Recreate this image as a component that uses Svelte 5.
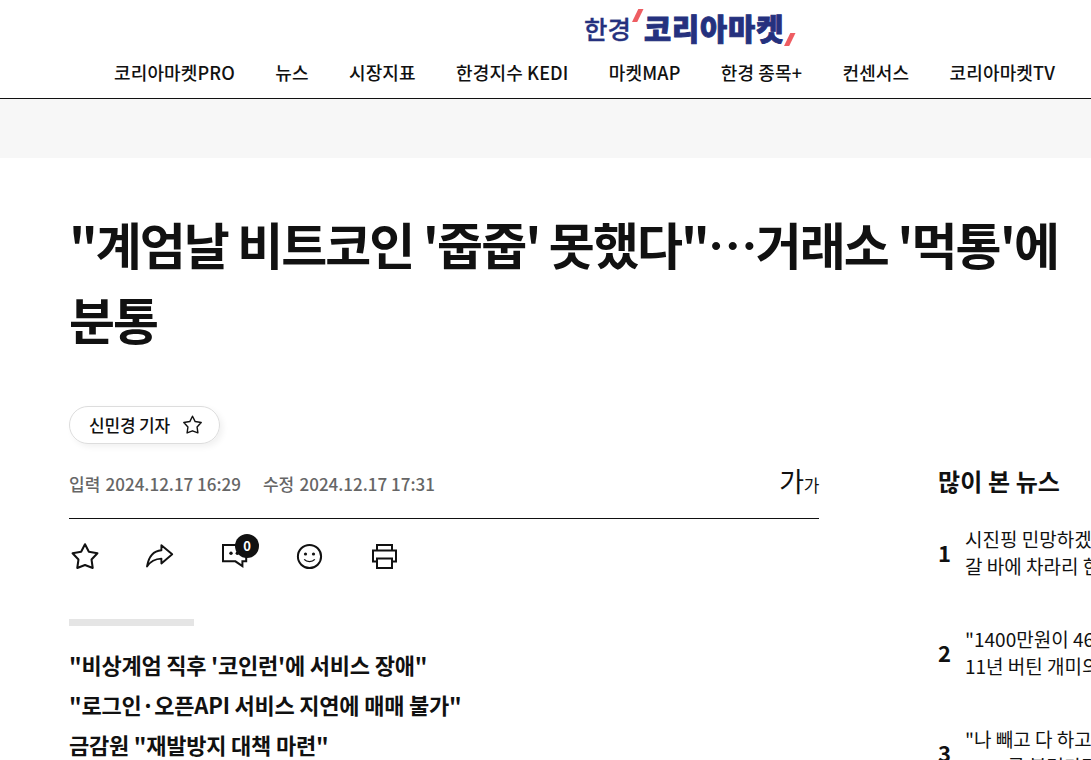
<script lang="ts">
  interface RankedNews {
    rank: number;
    lines: string[];
  }

  const menu = ['코리아마켓PRO', '뉴스', '시장지표', '한경지수 KEDI', '마켓MAP', '한경 종목+', '컨센서스', '코리아마켓TV'];

  const summary = [
    '"비상계엄 직후 \'코인런\'에 서비스 장애"',
    '"로그인·오픈API 서비스 지연에 매매 불가"',
    '금감원 "재발방지 대책 마련"'
  ];

  const ranking: RankedNews[] = [
    { rank: 1, lines: ['시진핑 민망하겠네', '갈 바에 차라리 한국'] },
    { rank: 2, lines: ['"1400만원이 46억', '11년 버틴 개미의'] },
    { rank: 3, lines: ['"나 빼고 다 하고', '6984를 불러가다'] }
  ];

  let commentCount = $state(0);
</script>

{#snippet star(size: number, stroke: number)}
  <svg width={size} height={size} viewBox="0 0 28 28" fill="none" stroke="#111" stroke-width={stroke} stroke-linejoin="round">
    <path d="M14 3 17.6 10.1 25.6 11.4 20.1 17.3 21.2 25.2 14 22.4 6.8 25.2 7.9 17.3 2.4 11.4 10.4 10.1Z" />
  </svg>
{/snippet}

<div class="screen">
  <header class="header">
    <a class="logo" href="#home" aria-label="한경 코리아마켓">
      <span class="logo-thin">한경</span>
      <svg class="tick tick-top" width="12" height="14" viewBox="0 0 12 14"><path d="M6.3 0h5.2L5.2 13H0Z" fill="#ee5d62" /></svg>
      <span class="logo-bold">코리아마켓</span>
      <svg class="tick tick-bottom" width="12" height="14" viewBox="0 0 12 14"><path d="M6.3 0h5.2L5.2 13H0Z" fill="#ee5d62" /></svg>
    </a>
    <nav class="menu">
      {#each menu as item (item)}
        <a href="#menu">{item}</a>
      {/each}
    </nav>
  </header>

  <div class="ad-band"></div>

  <main class="page">
    <h1 class="headline">"계엄날 비트코인 '줍줍' 못했다"⋯거래소 '먹통'에 분통</h1>

    <div class="columns">
      <article class="article">
        <button class="reporter" type="button">
          <span>신민경 기자</span>
          {@render star(21, 1.9)}
        </button>

        <div class="meta">
          <span class="date">입력 <b>2024.12.17 16:29</b></span>
          <span class="date">수정 <b>2024.12.17 17:31</b></span>
          <button class="font-size" type="button" aria-label="글자크기 조절">가<small>가</small></button>
        </div>

        <div class="tools">
          <button class="scrap" type="button" aria-label="스크랩">{@render star(30, 1.9)}</button>
          <button type="button" aria-label="공유">
            <svg width="32" height="30" viewBox="0 0 32 30" fill="none" stroke="#111" stroke-width="1.9" stroke-linejoin="round">
              <path d="M17.4 4.2 28.2 13.3 17.4 22.4V17.6C11 17.8 6.6 20 3 25.4 4.7 15.6 10 9.7 17.4 9.2Z" />
            </svg>
          </button>
          <button type="button" aria-label="댓글">
            <svg width="32" height="30" viewBox="0 0 32 30" fill="none" stroke="#111" stroke-width="2">
              <path d="M4 4H27.2V20.3H23.4V25L16.4 20.3H4Z" />
              <g fill="#111" stroke="none"><circle cx="12" cy="12.3" r="1.7" /><circle cx="18.3" cy="12.3" r="1.7" /></g>
            </svg>
            <span class="count">{commentCount}</span>
          </button>
          <button type="button" aria-label="반응">
            <svg width="32" height="30" viewBox="0 0 32 30" fill="none" stroke="#111">
              <circle cx="15.5" cy="15.5" r="11.6" stroke-width="2" />
              <path d="M10.2 18.4C12.8 21.3 18.2 21.3 20.8 18.4" stroke-width="1.4" />
              <g fill="#111" stroke="none"><circle cx="11.5" cy="13" r="1.6" /><circle cx="19.5" cy="13" r="1.6" /></g>
            </svg>
          </button>
          <button type="button" aria-label="프린트">
            <svg width="32" height="30" viewBox="0 0 32 30" fill="none" stroke="#111" stroke-width="2">
              <path d="M8 9V4H23V9M8 20.5H4V9.5H27V20.5H23M8 17.5H23V27H8Z" />
            </svg>
          </button>
        </div>

        <div class="bar"></div>

        <div class="summary">
          {#each summary as line (line)}
            <p>{line}</p>
          {/each}
        </div>
      </article>

      <aside class="aside">
        <h2>많이 본 뉴스</h2>
        <ol>
          {#each ranking as news (news.rank)}
            <li>
              <span class="rank">{news.rank}</span>
              <p>
                {#each news.lines as line (line)}
                  <span class="line">{line}</span>
                {/each}
              </p>
            </li>
          {/each}
        </ol>
      </aside>
    </div>
  </main>
</div>

<style>
  :global(body) {
    background: #fff;
    color: #111;
    font-family: 'Noto Sans CJK KR', sans-serif;
  }

  .screen {
    height: 760px;
    overflow: hidden;
  }

  a {
    color: inherit;
    text-decoration: none;
  }

  button {
    padding: 0;
    border: 0;
    background: none;
    color: inherit;
    font: inherit;
    cursor: pointer;
  }

  svg {
    display: block;
    flex: none;
  }

  .header {
    box-sizing: border-box;
    height: 99px;
    border-bottom: 1px solid #111;
  }

  .logo {
    display: flex;
    align-items: center;
    height: 54px;
    padding-left: 584px;
    color: #25317e;
    white-space: nowrap;
  }

  .logo-thin {
    width: 48px;
    font-size: 25.5px;
    font-weight: 500;
    letter-spacing: 0;
    -webkit-text-stroke: 0.3px #25317e;
  }

  .logo-bold {
    width: 140px;
    font-size: 29.5px;
    font-weight: 900;
    letter-spacing: 0.9px;
    -webkit-text-stroke: 0.9px #25317e;
  }

  .tick-top {
    margin-bottom: 23px;
  }

  .tick-bottom {
    margin-top: 26px;
  }

  .menu {
    display: flex;
    gap: 40.3px;
    padding-left: 114px;
    font-size: 18px;
    font-weight: 500;
    line-height: 36px;
    letter-spacing: 0.14px;
    white-space: nowrap;
  }

  .ad-band {
    height: 59px;
    background: #f7f7f7;
  }

  .page {
    width: 1100px;
    padding: 48px 0 0 69px;
  }

  .headline {
    width: 1010px;
    margin: 0;
    font-size: 50px;
    font-weight: 700;
    line-height: 75px;
    letter-spacing: -1.96px;
    word-break: keep-all;
  }

  .columns {
    display: flex;
    gap: 119px;
    padding-top: 50px;
  }

  .article {
    flex: none;
    width: 750px;
  }

  .reporter {
    display: flex;
    align-items: center;
    gap: 12px;
    box-sizing: border-box;
    width: 151px;
    height: 38px;
    padding: 0 0 1px 19px;
    border: 1px solid #ddd;
    border-radius: 19px;
    box-shadow: 3px 3px 6px rgba(0, 0, 0, 0.06);
    font-size: 17px;
    font-weight: 500;
    line-height: 24px;
    letter-spacing: -0.2px;
    white-space: nowrap;
  }

  .meta {
    display: flex;
    align-items: center;
    gap: 22px;
    box-sizing: border-box;
    height: 75px;
    padding-top: 5px;
    border-bottom: 1px solid #111;
    color: #666;
    font-size: 17px;
    font-weight: 500;
    line-height: 26px;
  }

  .date b {
    margin-left: 1.5px;
    font-weight: 500;
  }

  .font-size {
    margin: -2px 0 0 auto;
    color: #111;
    font-size: 27px;
    font-weight: 400;
    letter-spacing: -0.4px;
  }

  .font-size small {
    font-size: 17px;
  }

  .tools {
    display: flex;
    gap: 43px;
    padding-top: 22px;
  }

  .tools button {
    position: relative;
    width: 32px;
    height: 30px;
  }

  .tools .scrap {
    box-sizing: border-box;
    padding-left: 1px;
  }

  .count {
    position: absolute;
    top: -7px;
    left: 16px;
    width: 24px;
    height: 24px;
    border-radius: 50%;
    background: #111;
    color: #fff;
    font-size: 13px;
    font-weight: 700;
    line-height: 23px;
    text-align: center;
  }

  .bar {
    width: 125px;
    height: 7px;
    margin-top: 48px;
    background: #e5e5e5;
  }

  .summary {
    padding-top: 18px;
    font-size: 22px;
    font-weight: 700;
    line-height: 40px;
    letter-spacing: -0.22px;
  }

  .summary p {
    margin: 0;
    white-space: nowrap;
  }

  .aside {
    flex: none;
    width: 300px;
    padding-top: 57px;
  }

  .aside h2 {
    margin: 0;
    font-size: 24px;
    font-weight: 700;
    line-height: 36px;
    letter-spacing: 0.1px;
  }

  .aside ol {
    margin: 0;
    padding: 26px 0 0;
    list-style: none;
  }

  .aside li {
    display: flex;
    align-items: center;
    height: 54px;
    margin-bottom: 46px;
  }

  .rank {
    width: 27px;
    font-size: 22px;
    font-weight: 700;
  }

  .aside p {
    margin: 0;
    font-size: 19px;
    line-height: 27px;
    white-space: nowrap;
  }

  .line {
    display: block;
  }
</style>
